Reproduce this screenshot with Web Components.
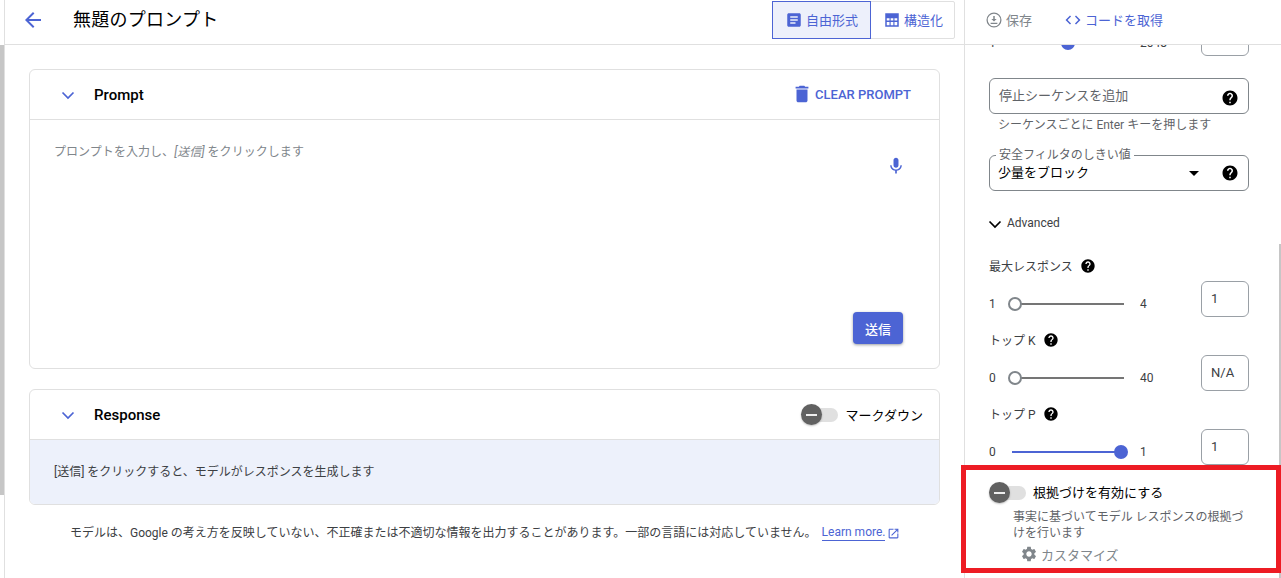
<!DOCTYPE html>
<html lang="ja">
<head>
<meta charset="utf-8">
<title>無題のプロンプト</title>
<style>
    html, body { margin: 0; height: 100%; overflow: hidden; background: #fff; }
    body { font-family: Roboto, "Noto Sans CJK JP", sans-serif; color: #202124; }
</style>
</head>
<body>
<gm-app>
    <gm-header slot="header"></gm-header>
    <gm-card slot="main" height="300">
        <span slot="title">Prompt</span>
        <gm-clear slot="actions"></gm-clear>
        <gm-prompt></gm-prompt>
    </gm-card>
    <gm-card slot="main" height="116" style="margin-top:20px">
        <span slot="title">Response</span>
        <gm-labeled-toggle slot="actions" style="margin-right:16px">マークダウン</gm-labeled-toggle>
        <gm-response>[送信] をクリックすると、モデルがレスポンスを生成します</gm-response>
    </gm-card>
    <gm-disclaimer slot="main"></gm-disclaimer>
    <gm-settings slot="panel"></gm-settings>
</gm-app>

<script>
(() => {

    const BLUE = '#4c64d4';

    const ICONS = {
        back: '<path d="M20 11H7.83l5.59-5.59L12 4l-8 8 8 8 1.41-1.41L7.83 13H20v-2z"/>',
        chevron: '<path d="M6.5 9.5l5.5 5.5 5.5-5.5" fill="none" stroke="currentColor" stroke-width="1.7"/>',
        article: '<path d="M19 3H5c-1.1 0-2 .9-2 2v14c0 1.1.9 2 2 2h14c1.1 0 2-.9 2-2V5c0-1.1-.9-2-2-2zm-5 14H7v-2h7v2zm3-4H7v-2h10v2zm0-4H7V7h10v2z"/>',
        table: '<path fill-rule="evenodd" d="M3 3h18v18H3zM5 9.5h3.7v3H5zM10.2 9.5h3.6v3h-3.6zM15.3 9.5H19v3h-3.7zM5 14.5h3.7V19H5zM10.2 14.5h3.6V19h-3.6zM15.3 14.5H19V19h-3.7z"/>',
        save: '<circle cx="12" cy="12" r="9.2" fill="none" stroke="currentColor" stroke-width="1.7"/><path d="M11 6.5h2v4h2.6L12 14l-3.6-3.5H11zM7.5 15.5h9v1.7h-9z"/>',
        code: '<path d="M9.4 16.6L4.8 12l4.6-4.6L8 6l-6 6 6 6 1.4-1.4zm5.2 0l4.6-4.6-4.6-4.6L16 6l6 6-6 6-1.4-1.4z"/>',
        trash: '<path d="M6 19c0 1.1.9 2 2 2h8c1.1 0 2-.9 2-2V7H6v12zM19 4h-3.5l-1-1h-5l-1 1H5v2h14V4z"/>',
        mic: '<path d="M12 14c1.66 0 2.99-1.34 2.99-3L15 5c0-1.66-1.34-3-3-3S9 3.34 9 5v6c0 1.66 1.34 3 3 3zm5.3-3c0 3-2.54 5.1-5.3 5.1S6.7 14 6.7 11H5c0 3.41 2.72 6.23 6 6.72V21h2v-3.28c3.28-.48 6-3.3 6-6.72h-1.7z"/>',
        help: '<path d="M12 2C6.48 2 2 6.48 2 12s4.48 10 10 10 10-4.48 10-10S17.52 2 12 2zm1 17h-2v-2h2v2zm2.07-7.75l-.9.92C13.45 12.9 13 13.5 13 15h-2v-.5c0-1.1.45-2.1 1.17-2.83l1.24-1.26c.37-.36.59-.86.59-1.41 0-1.1-.9-2-2-2s-2 .9-2 2H8c0-2.21 1.79-4 4-4s4 1.79 4 4c0 .88-.36 1.68-.93 2.25z"/>',
        gear: '<path d="M19.14 12.94c.04-.3.06-.61.06-.94 0-.32-.02-.64-.07-.94l2.03-1.58c.18-.14.23-.41.12-.61l-1.92-3.32c-.12-.22-.37-.29-.59-.22l-2.39.96c-.5-.38-1.03-.7-1.62-.94l-.36-2.54c-.04-.24-.24-.41-.48-.41h-3.84c-.24 0-.43.17-.47.41l-.36 2.54c-.59.24-1.13.57-1.62.94l-2.39-.96c-.22-.08-.47 0-.59.22L2.74 8.87c-.12.21-.08.47.12.61l2.03 1.58c-.05.3-.09.63-.09.94s.02.64.07.94l-2.03 1.58c-.18.14-.23.41-.12.61l1.92 3.32c.12.22.37.29.59.22l2.39-.96c.5.38 1.03.7 1.62.94l.36 2.54c.05.24.24.41.48.41h3.84c.24 0 .44-.17.47-.41l.36-2.54c.59-.24 1.13-.56 1.62-.94l2.39.96c.22.08.47 0 .59-.22l1.92-3.32c.12-.22.07-.47-.12-.61l-2.01-1.58zM12 15.6c-1.98 0-3.6-1.62-3.6-3.6s1.62-3.6 3.6-3.6 3.6 1.62 3.6 3.6-1.62 3.6-3.6 3.6z"/>',
        open: '<path d="M19 19H5V5h7V3H5c-1.11 0-2 .9-2 2v14c0 1.1.89 2 2 2h14c1.1 0 2-.9 2-2v-7h-2v7zM14 3v2h3.59l-9.83 9.83 1.41 1.41L19 6.41V10h2V3h-7z"/>'
    };

    const define = (name, html, extra = {}) => {
        const template = document.createElement('template');
        template.innerHTML = html;
        window.customElements.define(name, class extends HTMLElement {
            constructor() {
                super();
                this.attachShadow({mode: 'open'});
                this.shadowRoot.appendChild(template.content.cloneNode(true));
                if (extra.init) extra.init.call(this);
            }
        });
    };

    window.customElements.define('gm-icon', class GmIcon extends HTMLElement {

        static get observedAttributes() {
            return ['name', 'size'];
        }

        constructor() {
            super();
            this.attachShadow({mode: 'open'});
            this.shadowRoot.innerHTML = `
                <style>
                    :host { display: inline-flex; flex: none; }
                    svg { display: block; fill: currentColor; }
                </style>
                <svg viewBox="0 0 24 24"></svg>
            `;
            this.render();
        }

        attributeChangedCallback(name, oldValue, newValue) {
            if(oldValue !== newValue) {
                this.render();
            }
        }

        render() {
            const svg = this.shadowRoot.querySelector('svg');
            const size = this.getAttribute('size') || 24;
            svg.setAttribute('width', size);
            svg.setAttribute('height', size);
            svg.innerHTML = ICONS[this.getAttribute('name')] || '';
        }
    });

    define('gm-app', `
        <style>
            :host { display: flex; width: 1281px; height: 578px; overflow: hidden; position: relative; }
            .rail { width: 4px; flex: none; border-right: 1px solid #e0e0e0; }
            .rail div { margin-top: 45px; height: 450px; background: #c6c6c6; }
            .content { flex: 1; min-width: 0; display: flex; flex-direction: column; }
            .body { flex: 1; min-height: 0; display: flex; }
            .main { width: 960px; box-sizing: border-box; flex: none; padding: 24px 24px 0; border-right: 1px solid #e0e0e0; }
            .panel { flex: 1; min-width: 0; }
            .mark { position: absolute; left: 961px; top: 465px; width: 320px; height: 108px; box-sizing: border-box; border: 5px solid #ed1c24; }
        </style>
        <div class="rail"><div></div></div>
        <div class="content">
            <slot name="header"></slot>
            <div class="body">
                <div class="main"><slot name="main"></slot></div>
                <div class="panel"><slot name="panel"></slot></div>
            </div>
        </div>
        <div class="mark"></div>
    `);

    define('gm-header', `
        <style>
            :host { display: flex; height: 45px; box-sizing: border-box; border-bottom: 1px solid #e0e0e0; font-size: 13px; }
            .left { width: 960px; flex: none; box-sizing: border-box; display: flex; align-items: center; border-right: 1px solid #e0e0e0; padding-left: 16px; }
            .back { color: ${BLUE}; margin-top: -5px; }
            h1 { margin: -4px 0 0 28px; font-size: 18px; font-weight: 400; color: #000; line-height: 24px; letter-spacing: .25px; }
            .seg { margin: 1px 9px 0 auto; align-self: flex-start; display: flex; height: 36px; border: 1px solid #e0e0e0; border-radius: 2px; }
            .seg div { display: flex; align-items: center; gap: 3px; color: ${BLUE}; }
            .seg span { margin-top: -2px; }
            .seg .on { width: 99px; margin: -1px 0 -1px -1px; height: 38px; padding-left: 12px; box-sizing: border-box; background: #edf0fb; border: 1px solid ${BLUE}; }
            .seg .off { width: 83px; padding-left: 12px; box-sizing: border-box; }
            .right { display: flex; align-items: center; padding: 0 0 0 20px; color: #80868b; margin-top: -4px; }
            .right span { margin: -1px 0 0 3px; }
            .code { display: flex; align-items: center; margin-left: 32px; color: ${BLUE}; }
        </style>
        <div class="left">
            <gm-icon class="back" name="back"></gm-icon>
            <h1>無題のプロンプト</h1>
            <div class="seg">
                <div class="on"><gm-icon name="article" size="18"></gm-icon><span>自由形式</span></div>
                <div class="off"><gm-icon name="table" size="18"></gm-icon><span>構造化</span></div>
            </div>
        </div>
        <div class="right">
            <gm-icon name="save" size="18"></gm-icon><span>保存</span>
            <div class="code"><gm-icon name="code" size="18"></gm-icon><span>コードを取得</span></div>
        </div>
    `);

    define('gm-card', `
        <style>
            :host { display: block; box-sizing: border-box; border: 1px solid #e0e0e0; border-radius: 6px; overflow: hidden; background: #fff; }
            .head { height: 50px; box-sizing: border-box; border-bottom: 1px solid #e0e0e0; display: flex; align-items: center; padding-left: 26px; }
            .chev { color: ${BLUE}; }
            .title { margin-left: 14px; font-size: 15px; font-weight: 500; color: #000; }
            .actions { margin-left: auto; display: flex; align-items: center; }
        </style>
        <div class="head">
            <gm-icon class="chev" name="chevron"></gm-icon>
            <div class="title"><slot name="title"></slot></div>
            <div class="actions"><slot name="actions"></slot></div>
        </div>
        <slot></slot>
    `, {
        init() {
            this.style.height = this.getAttribute('height') + 'px';
        }
    });

    define('gm-clear', `
        <style>
            :host { display: flex; align-items: center; gap: 3px; margin-right: 28px; color: ${BLUE}; font-size: 13px; font-weight: 500; }
            gm-icon { margin: -2px -1px 0 0; }
        </style>
        <gm-icon name="trash" size="22"></gm-icon>CLEAR PROMPT
    `);

    define('gm-prompt', `
        <style>
            :host { display: flex; flex-direction: column; height: 248px; box-sizing: border-box; padding: 22px 36px 24px 24px; }
            .row { display: flex; justify-content: space-between; }
            .hint { font-size: 12px; line-height: 20px; color: #80868b; letter-spacing: .05px; }
            .hint i { font-style: italic; }
            gm-icon { margin: 14px -3px 0 0; color: ${BLUE}; }
            button { margin-top: auto; align-self: flex-end; width: 50px; height: 32px; border: 0; border-radius: 4px; background: ${BLUE}; color: #fff; font: inherit; font-size: 13px; font-weight: 500; box-shadow: 0 1px 3px rgba(60,64,67,.5); padding: 0; }
        </style>
        <div class="row">
            <div class="hint">プロンプトを入力し、<i>[送信]</i> をクリックします</div>
            <gm-icon name="mic" size="20"></gm-icon>
        </div>
        <button>送信</button>
    `);

    define('gm-response', `
        <style>
            :host { display: block; height: 64px; box-sizing: border-box; padding: 22px 24px 0; background: #edf1fb; font-size: 12px; line-height: 20px; color: #3c4043; }
        </style>
        <slot></slot>
    `);

    define('gm-toggle', `
        <style>
            :host { display: block; position: relative; width: 37px; height: 21px; flex: none; }
            .track { position: absolute; left: 9px; right: 0; top: 4px; height: 14px; border-radius: 7px; background: #e0e0e0; }
            .knob { position: absolute; left: 0; top: 0; width: 21px; height: 21px; border-radius: 50%; background: #616161; box-shadow: 0 1px 2px rgba(0,0,0,.25); }
            .knob::after { content: ''; position: absolute; left: 5px; right: 5px; top: 9.5px; height: 2px; background: #eee; }
        </style>
        <div class="track"></div>
        <div class="knob"></div>
    `);

    define('gm-labeled-toggle', `
        <style>
            :host { display: flex; align-items: center; gap: 8px; font-size: 13px; color: #000; }
        </style>
        <gm-toggle></gm-toggle><slot></slot>
    `);

    define('gm-disclaimer', `
        <style>
            :host { display: flex; align-items: center; margin-top: 18px; padding-left: 41px; font-size: 12px; line-height: 20px; color: #3c4043; white-space: nowrap; }
            a { margin-left: 5px; color: ${BLUE}; text-decoration: none; border-bottom: 1px solid ${BLUE}; line-height: 15px; }
            gm-icon { margin-left: 2px; color: ${BLUE}; }
        </style>
        <span>モデルは、Google の考え方を反映していない、不正確または不適切な情報を出力することがあります。一部の言語には対応していません。</span>
        <a href="#">Learn more.</a><gm-icon name="open" size="13"></gm-icon>
    `);

    define('gm-help', `
        <style>
            :host { display: inline-flex; flex: none; color: #000; }
        </style>
        <gm-icon name="help"></gm-icon>
    `, {
        init() {
            this.shadowRoot.querySelector('gm-icon').setAttribute('size', this.getAttribute('size') || 16);
        }
    });

    define('gm-slider', `
        <style>
            :host { display: flex; height: 36px; font-size: 12px; color: #3c4043; }
            .line { margin-top: 10px; height: 26px; display: flex; align-items: center; }
            .track { position: relative; width: 109px; height: 2px; background: #757575; }
            .thumb { position: absolute; top: -6px; width: 14px; height: 14px; box-sizing: border-box; border-radius: 50%; margin-left: -7px; background: #fff; border: 2px solid #80868b; }
            :host([on]) .track { background: ${BLUE}; }
            :host([on]) .thumb { background: ${BLUE}; border-color: ${BLUE}; }
            .box { margin-left: auto; width: 48px; height: 36px; box-sizing: border-box; border: 1px solid #9aa0a6; border-radius: 6px; padding: 7px 0 0 9px; font-size: 13px; line-height: 20px; }
        </style>
        <div class="line">
            <span class="min"></span>
            <div class="track"><div class="thumb"></div></div>
            <span class="max"></span>
        </div>
        <div class="box"></div>
    `, {
        init() {
            const $ = s => this.shadowRoot.querySelector(s);
            const lead = +(this.getAttribute('lead') || 26);
            $('.min').textContent = this.getAttribute('min');
            $('.min').style.width = lead + 'px';
            $('.max').textContent = this.getAttribute('max');
            $('.max').style.marginLeft = (42 - lead) + 'px';
            $('.thumb').style.left = (this.getAttribute('pos') || 0) + '%';
            $('.box').textContent = this.getAttribute('value');
        }
    });

    define('gm-field', `
        <style>
            :host { display: flex; position: relative; height: 36px; box-sizing: border-box; border: 1px solid #80868b; border-radius: 6px; align-items: center; padding: 0 9px; font-size: 13px; }
            .legend { position: absolute; left: 6px; top: -9px; padding: 0 3px; background: #fff; font-size: 12px; line-height: 16px; color: #5f6368; }
            .legend:empty { display: none; }
            .text { flex: 1; min-width: 0; }
            ::slotted([slot=extra]) { margin-left: 12px; }
        </style>
        <div class="legend"></div>
        <div class="text"><slot></slot></div>
        <slot name="extra"></slot>
    `, {
        init() {
            this.shadowRoot.querySelector('.legend').textContent = this.getAttribute('legend') || '';
        }
    });

    define('gm-settings', `
        <style>
            :host { display: block; position: relative; height: 533px; overflow: hidden; font-size: 12px; color: #3c4043; }
            .inner { width: 260px; margin: -25px 0 0 24px; }
            .thumbbar { position: absolute; right: 0; top: 199px; bottom: 0; width: 2px; background: #c6c6c6; }
            .stop { margin-top: 22px; color: #5f6368; }
            .stop .ph { margin-top: -4px; }
            .stop gm-help { margin-top: 4px; }
            .hint { height: 20px; line-height: 22px; padding-left: 9px; color: #5f6368; }
            .safety { margin-top: 21px; color: #000; }
            .safety .val { margin: -3px 0 0 -1px; }
            .safety gm-help { margin-left: 22px; }
            .caret { width: 0; height: 0; border-left: 5px solid transparent; border-right: 5px solid transparent; border-top: 5px solid #000; margin-top: 0; }
            .adv { display: flex; align-items: center; height: 20px; margin-top: 22px; color: #3c4043; }
            .adv gm-icon { margin: 2px 0 0 -6px; color: #000; }
            .label { display: flex; height: 20px; line-height: 22px; }
            .label gm-help { margin: 2px 0 0 7px; }
            .label + gm-slider { margin-top: 5px; }
            gm-slider + .label { margin-top: 13px; }
            .l1 { margin-top: 23px; }
            .ground { margin-top: 17px; display: flex; align-items: center; gap: 7px; font-size: 13px; color: #000; height: 21px; }
            .ground span { margin-top: -2px; }
            .desc { margin: 6px 0 0 24px; font-size: 12px; line-height: 16px; color: #5f6368; width: 238px; }
            .custom { margin: 3px 0 0 31px; display: flex; align-items: center; gap: 3px; height: 20px; font-size: 13px; color: #80868b; }
        </style>
        <div class="thumbbar"></div>
        <div class="inner">
            <gm-slider min="1" max="2048" pos="49" value="" on></gm-slider>
            <gm-field class="stop"><div class="ph">停止シーケンスを追加</div><gm-help slot="extra" size="18"></gm-help></gm-field>
            <div class="hint">シーケンスごとに Enter キーを押します</div>
            <gm-field class="safety" legend="安全フィルタのしきい値">
                <div class="val">少量をブロック</div>
                <div class="caret" slot="extra"></div>
                <gm-help slot="extra" size="18"></gm-help>
            </gm-field>
            <div class="adv"><gm-icon name="chevron"></gm-icon>Advanced</div>
            <div class="label l1">最大レスポンス<gm-help></gm-help></div>
            <gm-slider min="1" max="4" value="1"></gm-slider>
            <div class="label">トップ K<gm-help></gm-help></div>
            <gm-slider min="0" max="40" value="N/A"></gm-slider>
            <div class="label">トップ P<gm-help></gm-help></div>
            <gm-slider min="0" max="1" pos="100" lead="23" value="1" on></gm-slider>
            <div class="ground"><gm-toggle></gm-toggle><span>根拠づけを有効にする</span></div>
            <div class="desc">事実に基づいてモデル レスポンスの根拠づけを行います</div>
            <div class="custom"><gm-icon name="gear" size="18"></gm-icon>カスタマイズ</div>
        </div>
    `);

})();
</script>
</body>
</html>
